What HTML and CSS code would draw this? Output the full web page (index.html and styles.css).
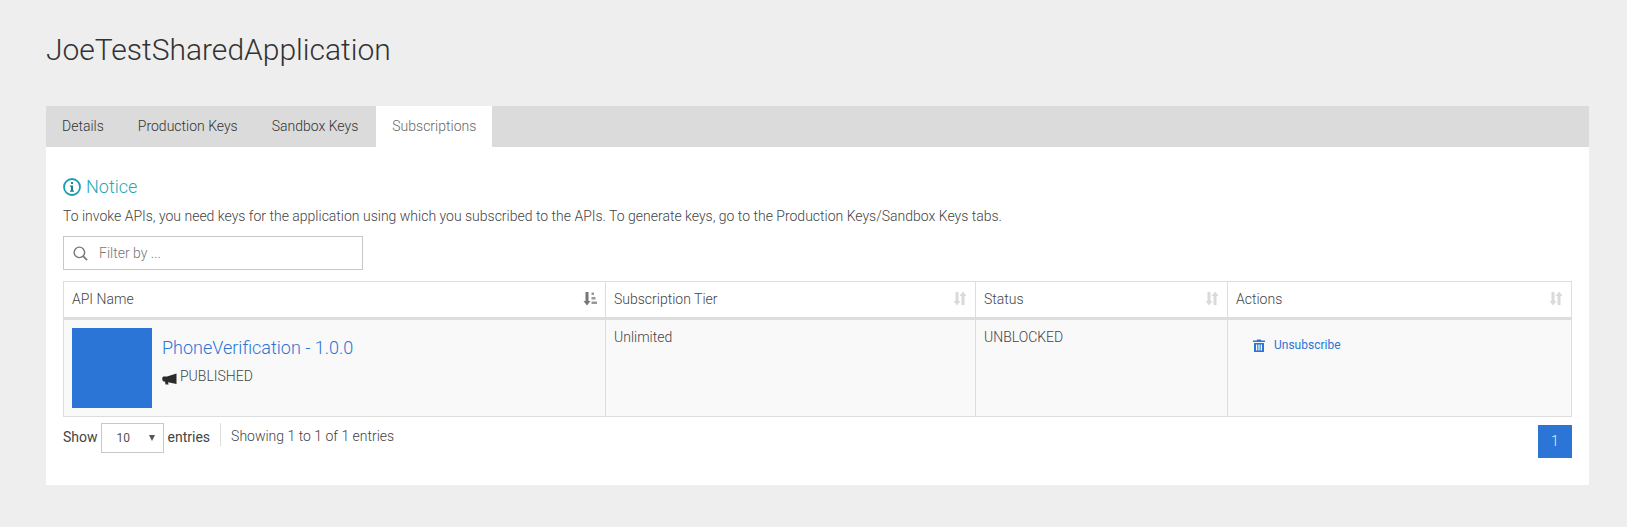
FILE: index.html
```html
<!DOCTYPE html>
<html lang="en">
<head>
    <meta charset="UTF-8">
    <meta name="viewport" content="width=device-width, initial-scale=1.0">
    <title>JoeTestSharedApplication</title>
    <link rel="stylesheet" href="styles.css">
</head>
<body>
    <h1 class="page-title">JoeTestSharedApplication</h1>

    <div class="panel">
        <ul class="tabs">
            <li class="tab">Details</li>
            <li class="tab">Production Keys</li>
            <li class="tab">Sandbox Keys</li>
            <li class="tab active">Subscriptions</li>
        </ul>

        <div class="panel-body">
            <h4 class="notice-title">
                <svg class="notice-icon" viewBox="0 0 18 18" width="18" height="18">
                    <circle cx="9" cy="9" r="8" fill="none" stroke="#1a9fb0" stroke-width="1.8"/>
                    <rect x="8" y="4" width="2" height="2" fill="#1a7f8e"/>
                    <path d="M7 7.500h3v5h1v1.300H7v-1.300h1V8.800H7z" fill="#1a7f8e"/>
                </svg>
                Notice
            </h4>
            <p class="notice-text">To invoke APIs, you need keys for the application using which you subscribed to the APIs. To generate keys, go to the Production Keys/Sandbox Keys tabs.</p>

            <div class="filter">
                <svg class="filter-icon" viewBox="0 0 16 16" width="15" height="15">
                    <circle cx="6.800" cy="6.800" r="5.600" fill="none" stroke="#777" stroke-width="1.500"/>
                    <path d="M10.800 10.800l4.200 4.200" stroke="#777" stroke-width="1.800" fill="none"/>
                </svg>
                <span class="filter-text">Filter by ...</span>
            </div>

            <table class="sub-table">
                <thead>
                    <tr>
                        <th class="col-name"><div class="th-inner">API Name
                            <svg class="sort" viewBox="0 0 14 15" width="14" height="15">
                                <path d="M2.500 1h3v9h2l-3.500 4.500L0.500 10h2z" fill="#777"/>
                                <path d="M8.500 1.500h2.500v2.500H8.500zM8.500 6h4v2.500h-4zM8.500 10.500h5.500V13H8.500z" fill="#999"/>
                            </svg></div></th>
                        <th class="col-tier"><div class="th-inner">Subscription Tier
                            <svg class="sort" viewBox="0 0 14 15" width="14" height="15">
                                <path d="M2.500 1h3v9h2l-3.500 4.500L0.500 10h2zM8.500 14V5h-2L10 0.500 13.500 5h-2v9z" fill="#dadada"/>
                            </svg></div></th>
                        <th class="col-status"><div class="th-inner">Status
                            <svg class="sort" viewBox="0 0 14 15" width="14" height="15">
                                <path d="M2.500 1h3v9h2l-3.500 4.500L0.500 10h2zM8.500 14V5h-2L10 0.500 13.500 5h-2v9z" fill="#dadada"/>
                            </svg></div></th>
                        <th><div class="th-inner">Actions
                            <svg class="sort" viewBox="0 0 14 15" width="14" height="15">
                                <path d="M2.500 1h3v9h2l-3.500 4.500L0.500 10h2zM8.500 14V5h-2L10 0.500 13.500 5h-2v9z" fill="#dadada"/>
                            </svg></div></th>
                    </tr>
                </thead>
                <tbody>
                    <tr>
                        <td>
                            <div class="api-cell">
                                <div class="api-thumb"></div>
                                <div class="api-info">
                                    <a class="api-link">PhoneVerification - 1.0.0</a>
                                    <div class="api-state">
                                        <svg class="horn" viewBox="0 0 15 12" width="15" height="12">
                                            <path d="M14.500 0.500V11L6 9.200 6.600 11.400 3.600 11.600 2.900 8.600H1.400L0.300 7V4.600L1.400 3.400H5z" fill="#2b2b2b"/>
                                        </svg>
                                        PUBLISHED
                                    </div>
                                </div>
                            </div>
                        </td>
                        <td>Unlimited</td>
                        <td>UNBLOCKED</td>
                        <td>
                            <a class="unsub">
                                <svg class="trash" viewBox="0 0 12 13" width="12" height="13">
                                    <path d="M4.200 0.400h3.600l.5 1.200H12v1.400H0V1.600h3.700z" fill="#2b75d6"/>
                                    <path d="M1 4h10v9H1zM3 5.500v6h1.300v-6zM5.350 5.500v6h1.300v-6zM7.700 5.500v6H9v-6z" fill="#2b75d6" fill-rule="evenodd"/>
                                </svg>
                                Unsubscribe
                            </a>
                        </td>
                    </tr>
                </tbody>
            </table>

            <div class="table-foot">
                <div class="length">
                    <span class="length-label">Show</span>
                    <div class="length-select"><span>10</span><span class="caret"></span></div>
                    <span class="length-label entries-label">entries</span>
                </div>
                <div class="info">Showing 1 to 1 of 1 entries</div>
                <div class="page-btn">1</div>
            </div>
        </div>
    </div>
</body>
</html>
```

FILE: styles.css
```css
body {
    margin: 0;
    padding: 0 38px 0 46px;
    font-family: Roboto, "Liberation Sans", sans-serif;
    font-size: 14px;
    font-weight: 300;
    color: #444;
    background-color: #eeeeee;
    overflow: hidden;
}
.page-title {
    margin: 0;
    padding-top: 28px;
    height: 106px;
    box-sizing: border-box;
    font-size: 30px;
    line-height: 44px;
    font-weight: 300;
    color: #333;
}
.panel {
    background-color: white;
    height: 379px;
}
.tabs {
    display: flex;
    margin: 0;
    padding: 0;
    height: 41px;
    list-style: none;
    background-color: #dbdbdb;
}
.tab {
    padding: 0 18px 0 16px;
    line-height: 41px;
    color: #333;
}
.tab.active {
    padding-right: 16px;
    background-color: white;
    color: #666;
}
.panel-body {
    padding: 0 17px;
}
.notice-title {
    display: flex;
    align-items: center;
    gap: 5px;
    margin: 0;
    padding-top: 29px;
    font-size: 18px;
    line-height: 22px;
    font-weight: 300;
    color: #1fa8ba;
}
.notice-text {
    margin: 8px 0 0;
    line-height: 20px;
}
.filter {
    display: flex;
    align-items: center;
    width: 300px;
    height: 34px;
    margin-top: 10px;
    box-sizing: border-box;
    border: 1px solid #c8c8c8;
    padding-left: 9px;
}
.filter-text {
    margin-left: 11px;
    color: #777;
}
.sub-table {
    width: 100%;
    margin-top: 11px;
    border-collapse: collapse;
    table-layout: fixed;
}
.sub-table th, .sub-table td {
    border: 1px solid #dddddd;
    padding: 0 8px;
    text-align: left;
    font-weight: 300;
}
.sub-table th {
    height: 33px;
    padding-bottom: 2px;
    border-bottom: 3px solid #dddddd;
    background-color: white;
}
.sub-table td {
    height: 98px;
    padding-top: 9px;
    box-sizing: border-box;
    vertical-align: top;
    background-color: #f9f9f9;
}
.col-name {
    width: 525px;
}
.col-tier {
    width: 353px;
}
.col-status {
    width: 235px;
}
.th-inner {
    display: flex;
    justify-content: space-between;
    align-items: center;
}
.api-cell {
    display: flex;
    gap: 10px;
    margin-top: -1px;
}
.api-thumb {
    width: 80px;
    height: 80px;
    background-color: #2b75d6;
}
.api-link {
    display: block;
    margin-top: 8px;
    font-size: 18px;
    line-height: 24px;
    color: #2b75d6;
}
.api-state {
    display: flex;
    align-items: center;
    gap: 3px;
    margin-top: 6px;
    line-height: 20px;
}
.horn {
    margin-top: 5px;
}
.unsub {
    display: inline-flex;
    align-items: center;
    gap: 9px;
    margin: 9px 0 0 17px;
    font-size: 12px;
    font-weight: 400;
    color: #2b75d6;
}
.table-foot {
    display: flex;
    align-items: flex-start;
    margin-top: 8px;
}
.length {
    display: flex;
    align-items: flex-start;
    gap: 3px;
    height: 23px;
    margin-top: -2px;
    padding-right: 10px;
    border-right: 1px solid #dddddd;
}
.length-label {
    font-weight: 400;
    line-height: 28px;
}
.entries-label {
    margin-left: 1px;
}
.length-select {
    display: flex;
    justify-content: space-between;
    align-items: center;
    box-sizing: border-box;
    width: 63px;
    height: 30px;
    padding: 0 8px 0 15px;
    border: 1px solid #c8c8c8;
    font-size: 12px;
    font-weight: 400;
    color: #555;
}
.caret {
    width: 0;
    height: 0;
    border-left: 3px solid transparent;
    border-right: 3px solid transparent;
    border-top: 6px solid #555;
}
.info {
    margin-left: 10px;
    line-height: 22px;
}
.page-btn {
    margin-left: auto;
    width: 34px;
    height: 33px;
    line-height: 33px;
    text-align: center;
    color: #e8eefa;
    background-color: #2b75d6;
}
```
